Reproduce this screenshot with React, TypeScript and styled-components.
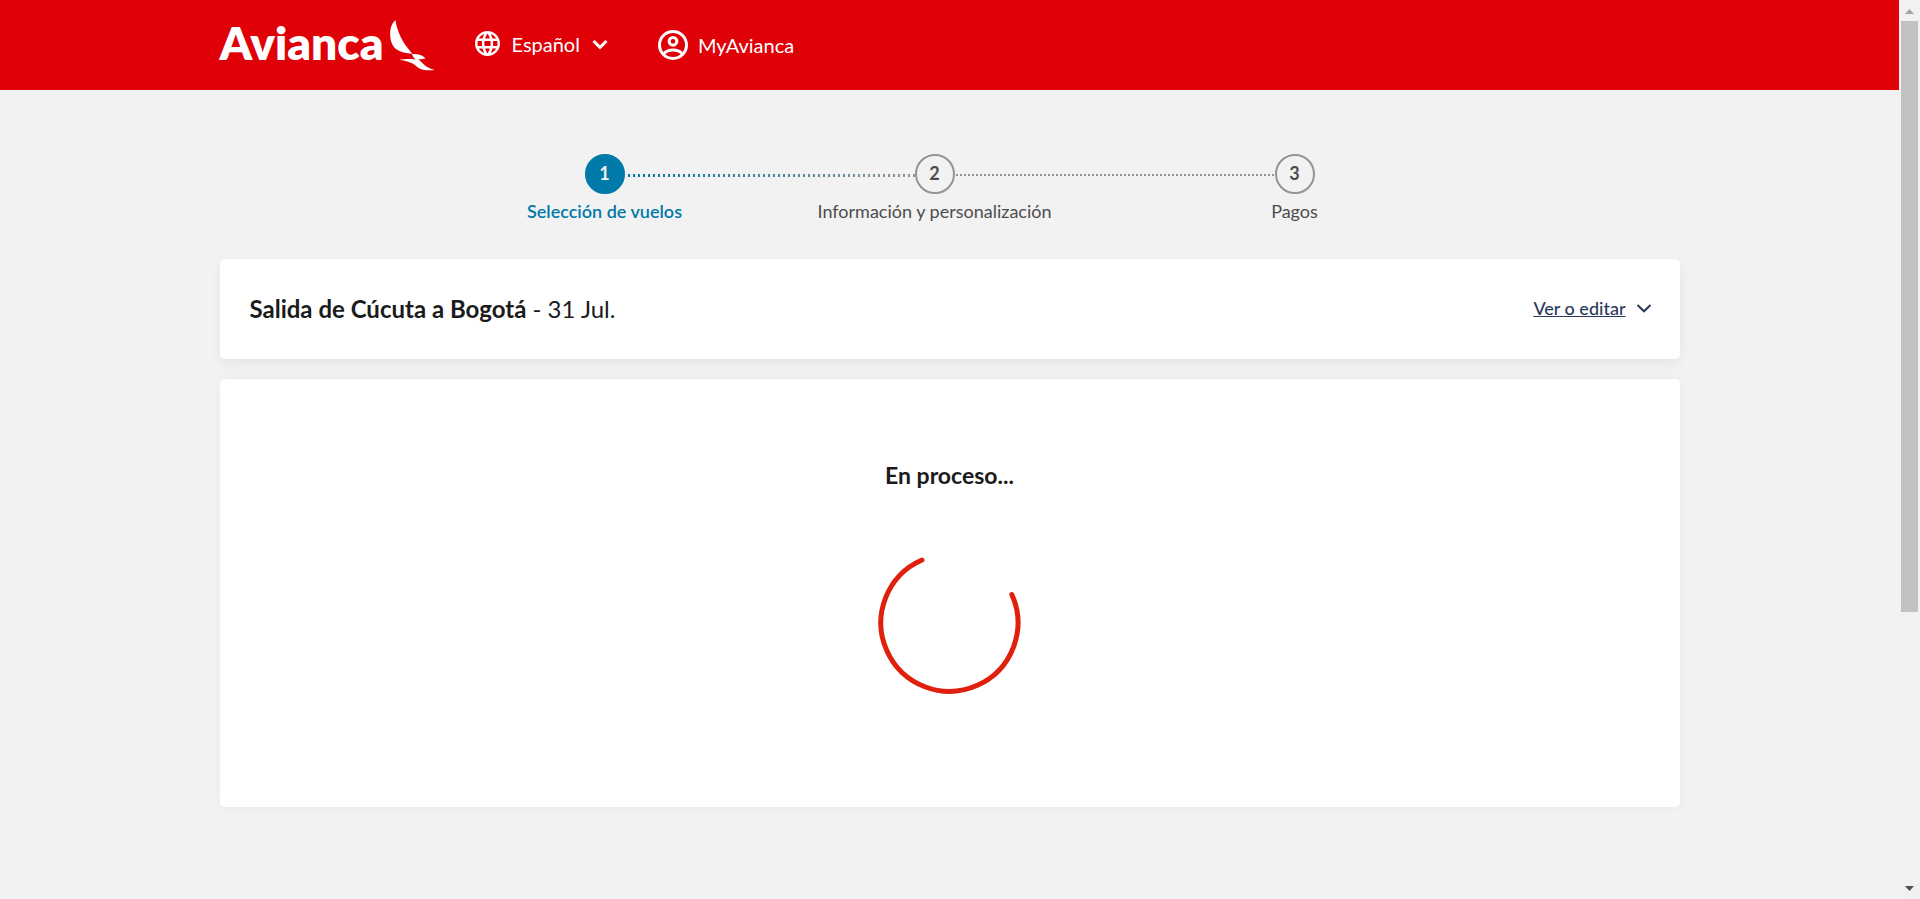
import React from "react";
import styled, { createGlobalStyle } from "styled-components";

const GlobalStyle = createGlobalStyle`
  *, *::before, *::after { box-sizing: border-box; }
  body {
    margin: 0;
    background: #f2f2f2;
    color: #1b1b1b;
    font-family: Lato, "Liberation Sans", sans-serif;
  }
  button, h1, h2, p, ol { margin: 0; padding: 0; }
  button { font: inherit; color: inherit; background: none; border: 0; cursor: pointer; }
`;

const Shell = styled.div`
  display: grid;
  grid-template-columns: minmax(0, 1fr) 21px;
  height: 100vh;
`;

const Page = styled.div`
  overflow: hidden;
`;

const Container = styled.div`
  max-width: 1460px;
  margin: 0 auto;
`;

const Header = styled.header`
  background: #df0008;
  color: #fff;
`;

const HeaderRow = styled(Container)`
  display: flex;
  align-items: center;
  height: 90px;
`;

const Logo = styled.a`
  display: flex;
  align-items: center;
  justify-content: space-between;
  width: 216px;
  color: #fff;
  text-decoration: none;
`;

const LogoText = styled.span`
  padding-bottom: 4px;
  font-size: 46px;
  font-weight: 800;
  line-height: 60px;
`;

const HeaderButton = styled.button<{ $start: number; $gap: number; $lift?: number }>`
  display: flex;
  align-items: center;
  gap: ${(p) => p.$gap}px;
  margin-left: ${(p) => p.$start}px;
  padding-bottom: ${(p) => p.$lift ?? 0}px;
  font-size: 20px;
  line-height: 24px;
`;

const Steps = styled.ol`
  display: grid;
  grid-template-columns: 40px 29fr 40px 32fr 40px;
  max-width: 730px;
  margin: 0 auto;
  padding: 64px 0 36px;
  list-style: none;
`;

const Step = styled.li<{ $active?: boolean }>`
  display: flex;
  flex-direction: column;
  align-items: center;
  gap: 5px;
  color: ${(p) => (p.$active ? "#007aa8" : "#4d4d4d")};
  font-size: 18px;
  font-weight: ${(p) => (p.$active ? 600 : 400)};
  line-height: 24px;
  white-space: nowrap;
`;

const StepNumber = styled.span<{ $active?: boolean }>`
  display: flex;
  align-items: center;
  justify-content: center;
  width: 40px;
  height: 40px;
  padding-bottom: 2px;
  border: 2px solid ${(p) => (p.$active ? "#007aa8" : "#949494")};
  border-radius: 50%;
  background: ${(p) => (p.$active ? "#007aa8" : "transparent")};
  color: ${(p) => (p.$active ? "#f2f2f2" : "#4d4d4d")};
  font-weight: 700;
`;

const Connector = styled.li<{ $done?: boolean }>`
  height: ${(p) => (p.$done ? 3 : 2)}px;
  margin: 20px 0 0 ${(p) => (p.$done ? 3 : 1)}px;
  background: ${(p) => (p.$done ? "linear-gradient(90deg, #007aa8, #949494)" : "#949494")};
  mask-image: linear-gradient(90deg, #000 2px, transparent 2px);
  mask-size: ${(p) => (p.$done ? 5 : 4)}px 100%;
`;

const Card = styled.section`
  border-radius: 5px;
  background: #fff;
  box-shadow: 0 4px 12px rgba(0, 0, 0, 0.06);
`;

const SummaryCard = styled(Card)`
  display: flex;
  align-items: center;
  justify-content: space-between;
  min-height: 100px;
  margin-bottom: 20px;
  padding: 0 28px 0 30px;
`;

const Title = styled.h1`
  font-size: 24px;
  font-weight: 400;
  line-height: 32px;
`;

const Route = styled.span`
  font-weight: 700;
`;

const EditButton = styled.button`
  display: flex;
  align-items: center;
  gap: 10px;
  padding-bottom: 2px;
  color: #2a3a5c;
  font-size: 18px;
  font-weight: 500;
  line-height: 24px;
`;

const EditLabel = styled.span`
  text-decoration: underline;
`;

const LoadingCard = styled(Card)`
  display: flex;
  flex-direction: column;
  align-items: center;
  gap: 60px;
  padding: 80px 0 112px;
  box-shadow: 0 0 12px rgba(0, 0, 0, 0.04);
`;

const LoadingText = styled.h2`
  font-size: 23px;
  font-weight: 700;
  line-height: 32px;
`;

const ScrollTrack = styled.div`
  display: flex;
  flex-direction: column;
  align-items: center;
  padding: 9px 2px 8px;
  background: #f1f1f1;
`;

const ScrollThumb = styled.div`
  flex: none;
  width: 17px;
  height: 67%;
  margin: 7px 0 auto;
  background: #c1c1c1;
`;

const Chevron = ({ width = 3 }: { width?: number }) => (
  <svg width="16" height="12" viewBox="0 0 16 12" fill="none" stroke="currentColor" strokeWidth={width} aria-hidden="true">
    <path d="M1.5 3 8 9.3 14.5 3" />
  </svg>
);

const BirdMark = () => (
  <svg width="46" height="52" viewBox="0 0 46 52" fill="#fff" aria-hidden="true">
    <path d="M5.300 1C1 5.500-.2 10.500.2 17c.5 6.500 2.800 11 6.500 13.500 4 2.800 9.500 3.500 15.700 4.500C16.500 27.500 8.500 19 5.300 1Z" />
    <path d="M21.900 34.900c5-.2 11.500.8 13.500 4.600-2 .9-4.800 1-7.200.5 4.500 3.500 7 8.800 16.500 11-6 .6-11 .2-14.700-1.300-4-1.700-4-3.700-8.500-5.600-3.500-1.700-8-2.700-12.500-3.400 5-.7 10-.8 16.500-.3-1.500-1.500-2.600-3-3.600-5.500Z" />
  </svg>
);

const GlobeIcon = () => (
  <svg width="25" height="25" viewBox="2 2 20 20" fill="currentColor" aria-hidden="true">
    <path d="M11.990 2C6.470 2 2 6.480 2 12s4.470 10 9.990 10C17.520 22 22 17.520 22 12S17.520 2 11.990 2zm6.930 6h-2.950c-.32-1.250-.78-2.450-1.380-3.560 1.840.63 3.370 1.910 4.330 3.560zM12 4.040c.83 1.200 1.480 2.530 1.910 3.960h-3.820c.43-1.430 1.080-2.760 1.910-3.960zM4.260 14C4.100 13.360 4 12.690 4 12s.1-1.360.26-2h3.380c-.08.66-.14 1.320-.14 2 0 .68.06 1.340.14 2H4.260zm.82 2h2.950c.32 1.250.78 2.450 1.380 3.560-1.840-.63-3.370-1.900-4.330-3.560zm2.950-8H5.080c.96-1.660 2.490-2.930 4.330-3.560C8.810 5.550 8.350 6.750 8.030 8zM12 19.960c-.83-1.200-1.480-2.530-1.910-3.960h3.820c-.43 1.430-1.080 2.760-1.910 3.960zM14.340 14H9.660c-.09-.66-.16-1.320-.16-2 0-.68.07-1.350.16-2h4.680c.09.65.16 1.320.16 2 0 .68-.07 1.340-.16 2zm.25 5.560c.6-1.110 1.060-2.310 1.380-3.560h2.950c-.96 1.650-2.490 2.930-4.330 3.560zM16.360 14c.08-.66.14-1.320.14-2 0-.68-.06-1.340-.14-2h3.380c.16.64.26 1.310.26 2s-.1 1.360-.26 2h-3.380z" />
  </svg>
);

const AccountIcon = () => (
  <svg width="30" height="30" viewBox="0 0 30 30" fill="none" stroke="currentColor" strokeWidth="3" aria-hidden="true">
    <circle cx="15" cy="15" r="13.500" />
    <circle cx="15" cy="11.300" r="3.900" />
    <path d="M5.700 23.500C8 21.300 11.300 20 15 20s7 1.300 9.300 3.500" />
  </svg>
);

const Spinner = () => (
  <svg width="144" height="144" viewBox="0 0 144 144" fill="none" stroke="#e0200c" strokeWidth="5" strokeLinecap="round" aria-hidden="true">
    <path d="M44 9A68.500 68.500 0 1 0 133.800 43.500" />
  </svg>
);

const Arrow = ({ down = false }: { down?: boolean }) => (
  <svg width="9" height="5" viewBox="0 0 9 5" fill={down ? "#505050" : "#a3a3a3"} aria-hidden="true">
    <path d={down ? "M0 0h9L4.500 5Z" : "M0 5h9L4.500 0Z"} />
  </svg>
);

export default function App() {
  return (
    <>
      <GlobalStyle />
      <Shell>
        <Page>
          <Header>
            <HeaderRow>
              <Logo href="#inicio">
                <LogoText>Avianca</LogoText>
                <BirdMark />
              </Logo>
              <HeaderButton $start={39} $gap={12} $lift={3}>
                <GlobeIcon />
                Español
                <Chevron />
              </HeaderButton>
              <HeaderButton $start={50} $gap={10}>
                <AccountIcon />
                MyAvianca
              </HeaderButton>
            </HeaderRow>
          </Header>
          <main>
            <Steps>
              <Step $active aria-current="step">
                <StepNumber $active>1</StepNumber>
                Selección de vuelos
              </Step>
              <Connector $done aria-hidden="true" />
              <Step>
                <StepNumber>2</StepNumber>
                Información y personalización
              </Step>
              <Connector aria-hidden="true" />
              <Step>
                <StepNumber>3</StepNumber>
                Pagos
              </Step>
            </Steps>
            <Container>
              <SummaryCard>
                <Title>
                  <Route>Salida de Cúcuta a Bogotá</Route> - 31 Jul.
                </Title>
                <EditButton>
                  <EditLabel>Ver o editar</EditLabel>
                  <Chevron width={2} />
                </EditButton>
              </SummaryCard>
              <LoadingCard aria-busy="true">
                <LoadingText>En proceso...</LoadingText>
                <Spinner />
              </LoadingCard>
            </Container>
          </main>
        </Page>
        <ScrollTrack aria-hidden="true">
          <Arrow />
          <ScrollThumb />
          <Arrow down />
        </ScrollTrack>
      </Shell>
    </>
  );
}
